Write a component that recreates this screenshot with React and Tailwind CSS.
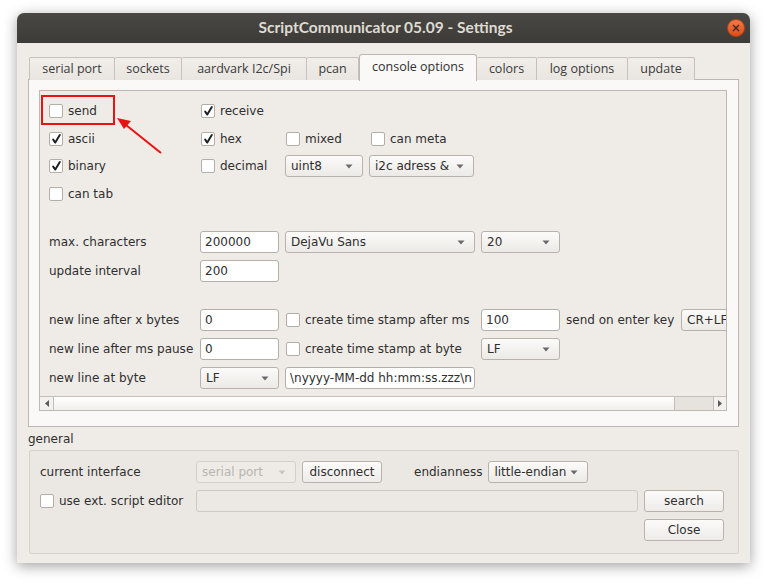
const tabs = [
  { label: 'serial port', w: 'w-[86px]' },
  { label: 'sockets', w: 'w-[67px]' },
  { label: 'aardvark I2c/Spi', w: 'w-[125px]' },
  { label: 'pcan', w: 'w-[52px]' },
  { label: 'console options', w: 'w-[118px]', active: true },
  { label: 'colors', w: 'w-[60px]' },
  { label: 'log options', w: 'w-[91px]' },
  { label: 'update', w: 'w-[67px]' },
];

function Check({ checked, label }) {
  return (
    <div className="flex shrink-0 items-center">
      <div className="flex h-[14px] w-[14px] shrink-0 items-center justify-center rounded-[2px] border border-[#b3aea7] bg-white">
        {checked && (
          <svg width="9" height="10" viewBox="0 0 9 10">
            <path d="M1.2 5.6 L3.3 8.6 L7.8 1" fill="none" stroke="#1e1e1e" strokeWidth="1.9" strokeLinecap="round" strokeLinejoin="round" />
          </svg>
        )}
      </div>
      <span className="ml-[5px] whitespace-nowrap">{label}</span>
    </div>
  );
}

function Input({ w, value, disabled }) {
  return (
    <div
      className={[
        'flex h-[22px] shrink-0 items-center overflow-hidden whitespace-nowrap rounded-[3px] border px-[4px]',
        disabled ? 'border-[#cdc9c3] bg-[#ece9e5]' : 'border-[#b4afa8] bg-white',
        w,
      ].join(' ')}
    >
      {value}
    </div>
  );
}

function Arrow({ color = '#6a6a6a' }) {
  return (
    <svg width="8" height="5" viewBox="0 0 8 5" className="shrink-0">
      <path d="M0.5 0.5 L7.5 0.5 L4 4.5 Z" fill={color} />
    </svg>
  );
}

function Select({ w, value, disabled }) {
  return (
    <div
      className={[
        'flex h-[22px] shrink-0 items-center justify-between overflow-hidden whitespace-nowrap rounded-[3px] border pl-[5px] pr-[9px]',
        disabled
          ? 'border-[#d3cfc9] bg-[#eeebe7] text-[#b9b5af]'
          : 'border-[#b7b2ab] bg-gradient-to-b from-[#fcfbfa] to-[#eceae6]',
        w,
      ].join(' ')}
    >
      <span>{value}</span>
      <Arrow color={disabled ? '#c9c5bf' : '#6a6a6a'} />
    </div>
  );
}

function Button({ w, label }) {
  return (
    <div
      className={[
        'flex h-[22px] shrink-0 items-center justify-center rounded-[3px] border border-[#b7b2ab] bg-gradient-to-b from-[#fcfbfa] to-[#eeece9]',
        w,
      ].join(' ')}
    >
      {label}
    </div>
  );
}

export default function App() {
  return (
    <div className="relative h-[585px] w-[767px] overflow-hidden bg-white pl-[17px] pt-[13px] font-['DejaVu_Sans',sans-serif] text-[12px] text-[#2f2f2f]">
      <div className="flex h-[550px] w-[733px] flex-col overflow-hidden rounded-t-[7px] bg-[#efebe7] shadow-[0_3px_14px_rgba(0,0,0,0.38)]">
        {/* title bar */}
        <div className="relative flex h-[30px] shrink-0 items-center justify-center bg-gradient-to-b from-[#4a4844] to-[#3c3b37]">
          <span className="pl-[4px] font-['Lato',sans-serif] text-[15.5px] font-bold text-[#dfdbd2]">
            ScriptCommunicator 05.09 - Settings
          </span>
          <div className="absolute right-[5px] top-[6px] flex h-[18px] w-[18px] items-center justify-center rounded-full border border-[#b9431a] bg-gradient-to-b from-[#f27a4a] to-[#df4b14]">
            <svg width="8" height="8" viewBox="0 0 8 8">
              <path d="M1 1 L7 7 M7 1 L1 7" stroke="#3a2a22" strokeWidth="1.4" />
            </svg>
          </div>
        </div>

        {/* body */}
        <div className="flex flex-1 flex-col px-[11px] pt-[11px]">
          {/* tab bar */}
          <div className="relative z-10 flex h-[26px] items-end pl-[1px]">
            {tabs.map((t) =>
              t.active ? (
                <div
                  key={t.label}
                  className={`${t.w} -mb-[1px] flex h-[27px] shrink-0 items-center justify-center rounded-t-[3px] border border-b-0 border-[#bdb8b1] bg-[#fbf9f7] pb-[1px] font-['Open_Sans',sans-serif] text-[12.5px] text-[#2f2f2f]`}
                >
                  {t.label}
                </div>
              ) : (
                <div
                  key={t.label}
                  className={`${t.w} flex h-[23px] shrink-0 items-center justify-center rounded-t-[2px] border border-b-0 border-l-0 border-[#c6c1ba] bg-gradient-to-b from-[#f1eeea] to-[#e9e6e2] font-['Open_Sans',sans-serif] text-[12.5px] text-[#3a3a3a] first:border-l`}
                >
                  {t.label}
                </div>
              )
            )}
          </div>

          {/* tab panel */}
          <div className="-mt-[1px] flex h-[348px] w-[711px] flex-col border border-[#bdb8b1] bg-[#fbf9f7] pb-[15px] pl-[10px] pr-[11px] pt-[10px]">
            <div className="flex flex-1 flex-col overflow-hidden border border-[#bdb8b1] bg-[#efece8]">
              {/* viewport */}
              <div className="flex flex-1 flex-col overflow-hidden pl-[9px] pt-[6px]">
                <div className="flex h-[28px] items-center">
                  <div className="w-[152px] shrink-0">
                    <Check label="send" />
                  </div>
                  <Check checked label="receive" />
                </div>
                <div className="flex h-[27px] items-center">
                  <div className="w-[152px] shrink-0">
                    <Check checked label="ascii" />
                  </div>
                  <div className="w-[85px] shrink-0">
                    <Check checked label="hex" />
                  </div>
                  <div className="w-[85px] shrink-0">
                    <Check label="mixed" />
                  </div>
                  <Check label="can meta" />
                </div>
                <div className="flex h-[28px] items-center">
                  <div className="w-[152px] shrink-0">
                    <Check checked label="binary" />
                  </div>
                  <div className="w-[84px] shrink-0">
                    <Check label="decimal" />
                  </div>
                  <Select w="w-[78px]" value="uint8" />
                  <Select w="ml-[6px] w-[105px]" value="i2c adress &" />
                </div>
                <div className="flex h-[28px] items-center">
                  <Check label="can tab" />
                </div>

                <div className="mt-[23px] flex h-[22px] items-center">
                  <span className="w-[151px] shrink-0 whitespace-nowrap">max. characters</span>
                  <Input w="w-[79px]" value="200000" />
                  <Select w="ml-[6px] w-[190px]" value="DejaVu Sans" />
                  <Select w="ml-[6px] w-[79px]" value="20" />
                </div>
                <div className="mt-[7px] flex h-[22px] items-center">
                  <span className="w-[151px] shrink-0 whitespace-nowrap">update interval</span>
                  <Input w="w-[79px]" value="200" />
                </div>

                <div className="mt-[27px] flex h-[22px] items-center">
                  <span className="w-[151px] shrink-0 whitespace-nowrap">new line after x bytes</span>
                  <Input w="w-[79px]" value="0" />
                  <div className="w-[202px] shrink-0 pl-[7px]">
                    <Check label="create time stamp after ms" />
                  </div>
                  <Input w="w-[79px]" value="100" />
                  <span className="w-[121px] shrink-0 whitespace-nowrap pl-[6px]">send on enter key</span>
                  <Select w="w-[100px]" value="CR+LF" />
                </div>
                <div className="mt-[7px] flex h-[22px] items-center">
                  <span className="w-[151px] shrink-0 whitespace-nowrap">new line after ms pause</span>
                  <Input w="w-[79px]" value="0" />
                  <div className="w-[202px] shrink-0 pl-[7px]">
                    <Check label="create time stamp at byte" />
                  </div>
                  <Select w="w-[79px]" value="LF" />
                </div>
                <div className="mt-[7px] flex h-[22px] items-center">
                  <span className="w-[151px] shrink-0 whitespace-nowrap">new line at byte</span>
                  <Select w="w-[79px]" value="LF" />
                  <Input w="ml-[6px] w-[190px]" value="\nyyyy-MM-dd hh:mm:ss.zzz\n" />
                </div>
              </div>

              {/* horizontal scrollbar */}
              <div className="flex h-[14px] shrink-0 border-t border-[#c4c0b9]">
                <div className="flex w-[13px] shrink-0 items-center justify-center bg-[#f3f1ee]">
                  <svg width="4" height="7" viewBox="0 0 4 7">
                    <path d="M4 0 L0 3.5 L4 7 Z" fill="#5a5a5a" />
                  </svg>
                </div>
                <div className="flex-1 border-x border-[#c4c0b9] bg-gradient-to-b from-[#ffffff] to-[#f1efec]" />
                <div className="w-[38px] shrink-0 bg-[#e6e3de]" />
                <div className="flex w-[13px] shrink-0 items-center justify-center border-l border-[#c4c0b9] bg-[#f3f1ee]">
                  <svg width="4" height="7" viewBox="0 0 4 7">
                    <path d="M0 0 L4 3.5 L0 7 Z" fill="#5a5a5a" />
                  </svg>
                </div>
              </div>
            </div>
          </div>

          {/* general group */}
          <div className="mt-[5px] h-[15px] leading-[15px]">general</div>
          <div className="ml-[1px] mt-[3px] flex h-[104px] w-[710px] flex-col rounded-[2px] border border-[#d6d2cc] bg-[#ebe8e4] pl-[10px] pr-[14px] pt-[10px]">
            <div className="flex h-[22px] items-center">
              <span className="w-[156px] shrink-0 whitespace-nowrap">current interface</span>
              <Select w="w-[100px]" value="serial port" disabled />
              <Button w="ml-[6px] w-[80px]" label="disconnect" />
              <span className="ml-[32px] whitespace-nowrap">endianness</span>
              <Select w="ml-[6px] w-[100px]" value="little-endian" />
            </div>
            <div className="mt-[7px] flex h-[22px] items-center">
              <div className="w-[156px] shrink-0">
                <Check label="use ext. script editor" />
              </div>
              <Input w="flex-1" value="" disabled />
              <Button w="ml-[6px] w-[80px]" label="search" />
            </div>
            <div className="mt-[7px] flex h-[22px] items-center justify-end">
              <Button w="w-[80px]" label="Close" />
            </div>
          </div>
        </div>
      </div>

      {/* annotation: red box and arrow */}
      <div className="pointer-events-none absolute left-[41px] top-[95px] h-[30px] w-[74px] border-2 border-[#ee1111]" />
      <svg className="pointer-events-none absolute left-0 top-0" width="767" height="585">
        <line x1="161" y1="153" x2="126" y2="125" stroke="#ee1111" strokeWidth="2" />
        <path d="M117 118 L131 121 L124 129 Z" fill="#ee1111" />
      </svg>
    </div>
  );
}
